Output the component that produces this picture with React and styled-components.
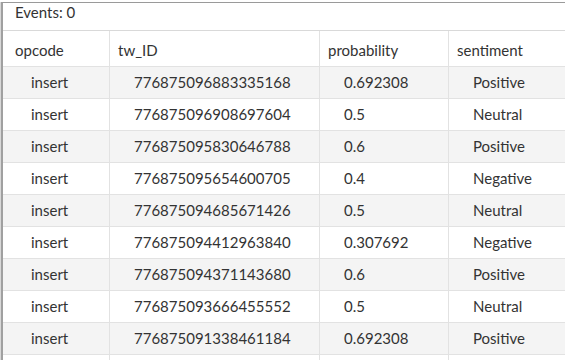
import React from "react";
import styled, { createGlobalStyle } from "styled-components";

const Global = createGlobalStyle`
  html, body { margin: 0; padding: 0; background: #fff; }
  body { font-family: Lato, "Open Sans", sans-serif; color: #333; overflow: hidden; }
`;

const Page = styled.div`
  width: 565px;
  height: 360px;
  overflow: hidden;
  padding: 2px 0 0 1px;
  box-sizing: border-box;
`;

const Panel = styled.div`
  width: 640px;
  border-top: 1px solid #9a9a9a;
  border-left: 2px solid #a0a0a0;
  box-shadow: -1px 0 0 #d8d8d8;
  background: #fff;
`;

const EventsBar = styled.div`
  height: 28px;
  box-sizing: border-box;
  padding: 0 0 0 12px;
  font-size: 15px;
  line-height: 18px;
  border-bottom: 1px solid #d9d9d9;
`;

const Row = styled.div`
  display: grid;
  grid-template-columns: 106px 210px 129px 1fr;
  height: ${(p) => (p.$header ? "36px" : "32px")};
  background: ${(p) => (p.$shade ? "#f4f4f4" : "#fff")};
  border-bottom: 1px solid #e2e2e2;
  box-sizing: border-box;
`;

const Cell = styled.div`
  display: flex;
  align-items: center;
  padding-left: ${(p) => (p.$first ? 12 : 8) + (p.$header ? 0 : 16)}px;
  padding-top: ${(p) => (p.$header ? "2px" : "0")};
  padding-bottom: ${(p) => (p.$header ? "0" : "1px")};
  border-left: ${(p) => (p.$first ? "none" : "1px solid #e2e2e2")};
  font-size: 15px;
  white-space: nowrap;
  color: #333;
`;

const data = [
  ["insert", "776875096883335168", "0.692308", "Positive"],
  ["insert", "776875096908697604", "0.5", "Neutral"],
  ["insert", "776875095830646788", "0.6", "Positive"],
  ["insert", "776875095654600705", "0.4", "Negative"],
  ["insert", "776875094685671426", "0.5", "Neutral"],
  ["insert", "776875094412963840", "0.307692", "Negative"],
  ["insert", "776875094371143680", "0.6", "Positive"],
  ["insert", "776875093666455552", "0.5", "Neutral"],
  ["insert", "776875091338461184", "0.692308", "Positive"],
];

const headers = ["opcode", "tw_ID", "probability", "sentiment"];

export default function App() {
  return (
    <Page>
      <Global />
      <Panel>
        <EventsBar>Events: 0</EventsBar>
        <Row $header>
          {headers.map((h, i) => (
            <Cell key={h} $header $first={i === 0}>
              {h}
            </Cell>
          ))}
        </Row>
        {data.map((r, ri) => (
          <Row key={ri} $shade={ri % 2 === 0}>
            {r.map((c, ci) => (
              <Cell key={ci} $first={ci === 0}>
                {c}
              </Cell>
            ))}
          </Row>
        ))}
        <Row>
          {headers.map((h, i) => (
            <Cell key={h} $first={i === 0} />
          ))}
        </Row>
      </Panel>
    </Page>
  );
}
